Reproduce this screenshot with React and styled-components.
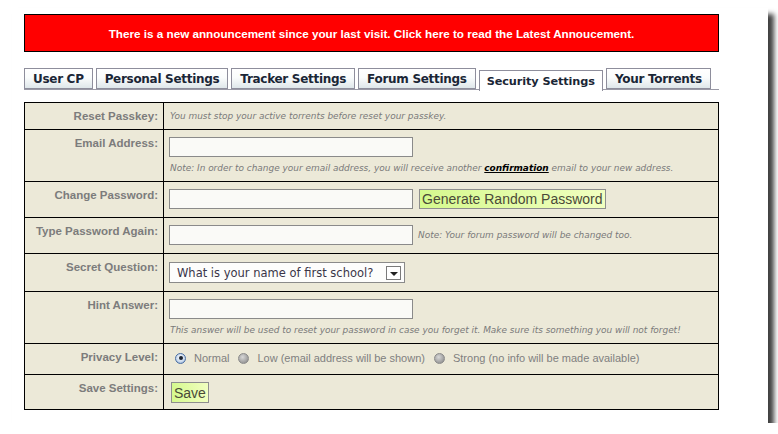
import styled, { createGlobalStyle } from 'styled-components';

const GlobalStyle = createGlobalStyle`
  html, body {
    margin: 0;
    padding: 0;
    background: #fff;
    overflow: hidden;
  }
  body {
    font-family: "Liberation Sans", Arial, sans-serif;
  }
`;

const Sheet = styled.div`
  width: 756px;
  height: 415px;
  margin: 8px 0 0 12px;
  padding: 6px 0 0 12px;
  box-sizing: border-box;
  background: #fff;
  box-shadow: 6px 6px 5px rgba(0, 0, 0, 0.75);
`;

const Content = styled.div`
  width: 695px;
`;

const Banner = styled.div`
  height: 38px;
  box-sizing: border-box;
  border: 1px solid #000;
  background: #ff0000;
  color: #fff;
  font-family: "Liberation Sans", Arial, sans-serif;
  font-weight: bold;
  font-size: 11.7px;
  display: flex;
  align-items: center;
  justify-content: center;
  cursor: pointer;
`;

const Tabs = styled.div`
  display: flex;
  align-items: flex-start;
  gap: 3px;
  margin-top: 16px;
  height: 21px;
  border-bottom: 1px solid #9a9aa6;
`;

const Tab = styled.div`
  height: 21px;
  box-sizing: border-box;
  margin-top: ${(p) => (p.$active ? '2px' : '0')};
  padding: ${(p) => (p.$active ? '0 7px' : '1px 8px 0')};
  border: 1px solid #8e8e9c;
  border-bottom: ${(p) => (p.$active ? 'none' : '1px solid #8e8e9c')};
  background: ${(p) =>
    p.$active ? '#fff' : 'linear-gradient(#ffffff, #fafcfc 45%, #dfe7ea)'};
  color: #1a2636;
  font-family: "DejaVu Sans", Verdana, sans-serif;
  font-weight: bold;
  font-size: ${(p) => (p.$active ? '11.3px' : '12px')};
  letter-spacing: ${(p) => (p.$active ? '-0.1px' : '-0.3px')};
  line-height: ${(p) => (p.$active ? '21px' : '18px')};
  white-space: nowrap;
`;

const Table = styled.div`
  margin-top: 12px;
  border: 1px solid #000;
  background: #ece9d8;
`;

const Row = styled.div`
  display: grid;
  grid-template-columns: 139px 1fr;
  height: ${(p) => p.$h}px;
  & + & {
    border-top: 1px solid #000;
  }
`;

const Label = styled.div`
  border-right: 1px solid #000;
  padding: 6px 5px 0 0;
  text-align: right;
  color: #7c7c7c;
  font-weight: bold;
  font-size: 11.5px;
  line-height: 14px;
`;

const Cell = styled.div`
  padding: 7px 5px 0 5px;
  display: flex;
  flex-direction: column;
  align-items: flex-start;
`;

const Line = styled.div`
  display: flex;
  align-items: center;
  gap: ${(p) => p.$gap || 6}px;
`;

const Note = styled.div`
  margin-top: ${(p) => p.$mt || 0}px;
  padding-left: 1px;
  color: #7a7a7a;
  font-family: "DejaVu Sans", Verdana, sans-serif;
  font-style: italic;
  font-size: 8.95px;
  line-height: 13px;
  white-space: nowrap;
`;

const Confirm = styled.a`
  color: #000;
  font-weight: bold;
  text-decoration: underline;
`;

const TextInput = styled.input`
  width: 244px;
  height: 20px;
  box-sizing: border-box;
  margin: 0;
  border: 1px solid #8a8a8a;
  background: #fafaf7;
  outline: none;
  padding: 0 3px;
`;

const GreenButton = styled.button`
  height: ${(p) => p.$h || 20}px;
  box-sizing: border-box;
  margin: 0 0 0 ${(p) => p.$ml || 0}px;
  padding: 0 2px;
  border: 1px solid #8e8e8e;
  background: linear-gradient(90deg, #d5f98e, #f1ffc0);
  color: #4a4a38;
  font-family: "Liberation Sans", Arial, sans-serif;
  font-size: 14px;
  line-height: 18px;
  cursor: pointer;
`;

const Select = styled.div`
  width: 236px;
  height: 21px;
  box-sizing: border-box;
  margin-top: 1px;
  border: 1px solid #8a8a8a;
  background: #fdfdfc;
  display: flex;
  align-items: center;
  justify-content: space-between;
  padding: 0 3px 0 7px;
  color: #3a3548;
  font-family: "DejaVu Sans", Verdana, sans-serif;
  font-size: 11.5px;
`;

const Arrow = styled.span`
  width: 15px;
  height: 14px;
  box-sizing: border-box;
  border: 1px solid #7a7a7a;
  background: #fff;
  display: flex;
  align-items: center;
  justify-content: center;
  &::after {
    content: '';
    margin-top: 2px;
    border-left: 4px solid transparent;
    border-right: 4px solid transparent;
    border-top: 4px solid #222;
  }
`;

const Radios = styled.div`
  display: flex;
  align-items: flex-start;
  padding: 7px 0 0 11px;
  color: #808080;
  font-size: 11px;
  line-height: 14px;
`;

const RadioItem = styled.label`
  display: flex;
  align-items: center;
  gap: 8px;
  margin-right: 9px;
`;

const Radio = styled.span`
  width: 11px;
  height: 11px;
  border-radius: 50%;
  box-sizing: border-box;
  position: relative;
  background: ${(p) =>
    p.$checked
      ? 'radial-gradient(circle at 50% 40%, #ffffff, #c8d8ec 60%, #6d8fbf)'
      : 'radial-gradient(circle at 40% 35%, #d8d8d8, #9c9c9c 70%, #7d7d7d)'};
  border: 1px solid ${(p) => (p.$checked ? '#4a6fa3' : '#8a8a8a')};
  ${(p) =>
    p.$checked &&
    `&::after {
      content: '';
      position: absolute;
      left: 2.5px;
      top: 2.5px;
      width: 4px;
      height: 4px;
      border-radius: 50%;
      background: #1c2430;
    }`}
`;

export default function App() {
  return (
    <>
      <GlobalStyle />
      <Sheet>
        <Content>
          <Banner>
            There is a new announcement since your last visit. Click here to
            read the Latest Annoucement.
          </Banner>
          <Tabs>
            <Tab>User CP</Tab>
            <Tab>Personal Settings</Tab>
            <Tab>Tracker Settings</Tab>
            <Tab>Forum Settings</Tab>
            <Tab $active>Security Settings</Tab>
            <Tab>Your Torrents</Tab>
          </Tabs>
          <Table>
            <Row $h={26}>
              <Label>Reset Passkey:</Label>
              <Cell>
                <Note>You must stop your active torrents before reset your passkey.</Note>
              </Cell>
            </Row>
            <Row $h={51}>
              <Label>Email Address:</Label>
              <Cell>
                <TextInput type="text" />
                <Note $mt={5}>
                  Note: In order to change your email address, you will receive
                  another <Confirm>confirmation</Confirm> email to your new
                  address.
                </Note>
              </Cell>
            </Row>
            <Row $h={35}>
              <Label>Change Password:</Label>
              <Cell>
                <Line>
                  <TextInput type="text" />
                  <GreenButton>Generate Random Password</GreenButton>
                </Line>
              </Cell>
            </Row>
            <Row $h={35}>
              <Label>Type Password Again:</Label>
              <Cell>
                <Line $gap={4}>
                  <TextInput type="text" />
                  <Note>Note: Your forum password will be changed too.</Note>
                </Line>
              </Cell>
            </Row>
            <Row $h={37}>
              <Label>Secret Question:</Label>
              <Cell>
                <Select>
                  What is your name of first school?
                  <Arrow />
                </Select>
              </Cell>
            </Row>
            <Row $h={51}>
              <Label>Hint Answer:</Label>
              <Cell>
                <TextInput type="text" />
                <Note $mt={5}>
                  This answer will be used to reset your password in case you
                  forget it. Make sure its something you will not forget!
                </Note>
              </Cell>
            </Row>
            <Row $h={30}>
              <Label>Privacy Level:</Label>
              <Radios>
                <RadioItem>
                  <Radio $checked />
                  Normal
                </RadioItem>
                <RadioItem>
                  <Radio />
                  Low (email address will be shown)
                </RadioItem>
                <RadioItem>
                  <Radio />
                  Strong (no info will be made available)
                </RadioItem>
              </Radios>
            </Row>
            <Row $h={34}>
              <Label>Save Settings:</Label>
              <Cell>
                <GreenButton $h={21} $ml={2}>Save</GreenButton>
              </Cell>
            </Row>
          </Table>
        </Content>
      </Sheet>
    </>
  );
}
